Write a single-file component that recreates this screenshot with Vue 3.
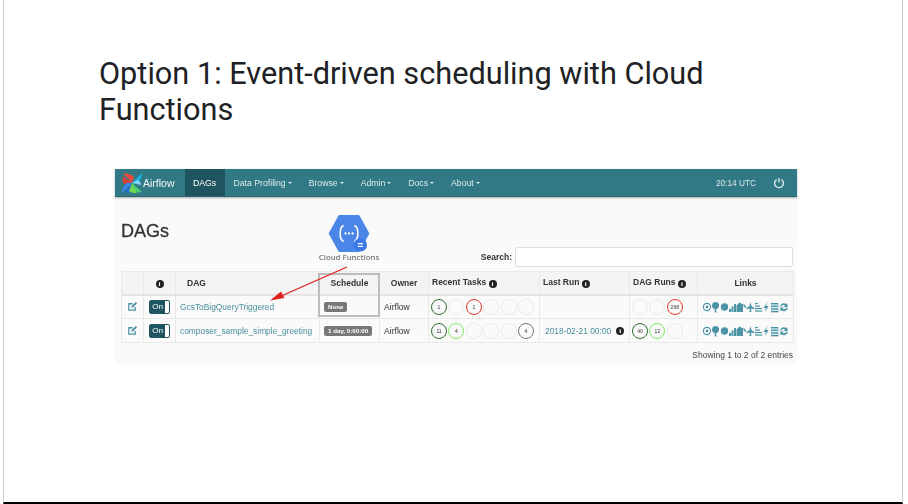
<script setup>
const navItems = ['Data Profiling', 'Browse', 'Admin', 'Docs', 'About']

const rows = [
  {
    dag: 'GcsToBigQueryTriggered',
    schedule: 'None',
    tasks: [
      { n: '1', c: 'dark' }, {}, { n: '1', c: 'red' }, {}, {}, {}
    ],
    lastRun: '',
    runs: [{}, {}, { n: '268', c: 'red' }]
  },
  {
    dag: 'composer_sample_simple_greeting',
    schedule: '1 day, 0:00:00',
    tasks: [
      { n: '11', c: 'dark' }, { n: '4', c: 'lime' }, {}, {}, {}, { n: '4', c: 'gray' }
    ],
    lastRun: '2018-02-21 00:00',
    runs: [{ n: '40', c: 'dark' }, { n: '12', c: 'lime' }, {}]
  }
]
</script>

<template>
  <main class="slide">
    <h1 class="title">Option 1: Event-driven scheduling with Cloud Functions</h1>

    <section class="shot">
      <div class="shot-inner">
        <nav class="nav">
          <div class="brand">
            <svg class="logo" viewBox="0 0 20 20">
              <path d="M10 10 1 0c3 0 8 1 11 4z" fill="#ef4b3e" />
              <path d="M10 10 1 3c-1 3-1 6 1 8z" fill="#d8433a" />
              <path d="M10 10 20 0c0 3-1 7-5 10z" fill="#19b3e6" />
              <path d="M10 10 16 7c2 1 3 3 3 5z" fill="#7fd6f2" />
              <path d="M10 10 0 20c0-3 1-7 5-10z" fill="#3a86f0" />
              <path d="M10 10 3 19c3 1 6 1 8-1z" fill="#2468d8" />
              <path d="M10 10 20 19c-3 1-7 0-10-3z" fill="#42cc74" />
              <path d="M10 10 15 20c-3 0-6 0-8-2z" fill="#6fd455" />
            </svg>
            <span>Airflow</span>
          </div>
          <a class="nav-item active">DAGs</a>
          <a v-for="item in navItems" :key="item" class="nav-item">
            {{ item }}<i class="caret"></i>
          </a>
          <span class="clock">20:14 UTC</span>
          <svg class="power" viewBox="0 0 12 12">
            <path d="M3.6 2.6a4.4 4.4 0 1 0 4.8 0" fill="none" stroke="#e8f1f2" stroke-width="1.3" />
            <path d="M6 1v4.4" stroke="#e8f1f2" stroke-width="1.3" />
          </svg>
        </nav>

        <div class="content">
          <h2 class="heading">DAGs</h2>
          <div class="search">
            <label>Search:</label>
            <input type="text">
          </div>

          <table class="dags">
            <colgroup>
              <col v-for="n in 9" :key="n">
            </colgroup>
            <thead>
              <tr>
                <th></th>
                <th class="center"><span class="info"><b>i</b></span></th>
                <th class="pad">DAG</th>
                <th class="center">Schedule</th>
                <th class="center">Owner</th>
                <th>Recent Tasks <span class="info"><b>i</b></span></th>
                <th>Last Run <span class="info"><b>i</b></span></th>
                <th>DAG Runs <span class="info"><b>i</b></span></th>
                <th class="center">Links</th>
              </tr>
            </thead>
            <tbody>
              <tr v-for="row in rows" :key="row.dag">
                <td class="center">
                  <svg class="edit" viewBox="0 0 12 12">
                    <path d="M9 6.5V10H2V3h4" fill="none" stroke="#4a94a6" stroke-width="1.4" />
                    <path d="M5 5.5 9.5 1 11 2.5 6.5 7H5z" fill="#4a94a6" />
                  </svg>
                </td>
                <td class="center">
                  <span class="toggle"><span class="toggle-on">On</span></span>
                </td>
                <td class="name"><a class="dag-link">{{ row.dag }}</a></td>
                <td class="sched"><span class="badge">{{ row.schedule }}</span></td>
                <td class="owner">Airflow</td>
                <td>
                  <div class="circles">
                    <span v-for="(t, i) in row.tasks" :key="i" class="circle" :class="t.c">{{ t.n }}</span>
                  </div>
                </td>
                <td>
                  <div v-if="row.lastRun" class="last-run">
                    <a class="dag-link">{{ row.lastRun }}</a>
                    <span class="info"><b>i</b></span>
                  </div>
                </td>
                <td>
                  <div class="circles">
                    <span v-for="(t, i) in row.runs" :key="i" class="circle" :class="t.c">{{ t.n }}</span>
                  </div>
                </td>
                <td class="center">
                  <svg class="links" viewBox="0 0 85 12">
                    <g fill="#4a94a6">
                      <circle cx="4" cy="6" r="3.6" fill="none" stroke="#4a94a6" stroke-width="1.1" />
                      <circle cx="4" cy="6" r="1.4" />
                      <circle cx="12.5" cy="4.5" r="3.5" />
                      <rect x="11.7" y="7" width="1.6" height="4.5" />
                      <circle cx="21.5" cy="6" r="3.7" />
                      <rect x="26" y="8" width="2" height="3" />
                      <rect x="28.5" y="5.5" width="2" height="5.5" />
                      <rect x="31" y="3" width="2" height="8" />
                      <path d="M33.5 11V4.5l3-3 3.5 2v7.5z" />
                      <path d="M40.5 2.5 43.5 6l-1 1-2-2z" />
                      <path d="M47.5 1 48.5 5l3 2.2v1L48.5 7.4 48 10l1 1h-3l1-1-.5-2.6-3 .8v-1l3-2.2z" />
                      <rect x="52" y="2" width="3" height="1.2" />
                      <rect x="52" y="4.5" width="5" height="1.2" />
                      <rect x="52" y="7" width="7" height="1.2" />
                      <rect x="52" y="9.5" width="7" height="1.2" />
                      <path d="M64.5 1 60.5 7H63l-1 4 3.6-6H63z" />
                      <rect x="68" y="2" width="7.5" height="1.5" />
                      <rect x="68" y="4.6" width="7.5" height="1.5" />
                      <rect x="68" y="7.2" width="7.5" height="1.5" />
                      <rect x="68" y="9.8" width="7.5" height="1.5" />
                      <path d="M77 5.5a4 4 0 0 1 6.5-2.3l1-1V6h-3.7l1.4-1.4a2.3 2.3 0 0 0-3.8 1zM84.8 6.8a4 4 0 0 1-6.5 2.4l-1 1V6.4H81l-1.4 1.4a2.3 2.3 0 0 0 3.6-1z" />
                    </g>
                  </svg>
                </td>
              </tr>
            </tbody>
          </table>

          <p class="entries">Showing 1 to 2 of 2 entries</p>
        </div>

        <div class="highlight"></div>

        <div class="cloud-fn">
          <svg class="hex" viewBox="0 0 46 42">
            <path d="M12 1h22l11 20-11 20H12L1 21z" fill="#4a86e8" stroke="#4a86e8" stroke-linejoin="round" stroke-width="2" />
            <path d="M17 12c-3 1-4 5-4 9s1 8 4 9M29 12c3 1 4 5 4 9s-1 8-4 9" fill="none" stroke="#fff" stroke-width="1.8" />
            <circle cx="19" cy="21" r="1.3" fill="#fff" />
            <circle cx="23" cy="21" r="1.3" fill="#fff" />
            <circle cx="27" cy="21" r="1.3" fill="#fff" />
            <circle cx="36" cy="34" r="7.5" fill="#3b78e7" />
            <path d="M33 32.5h6M33 35.5h6" stroke="#fff" stroke-width="1.4" />
          </svg>
          <span class="cloud-label">Cloud Functions</span>
        </div>

        <svg class="arrow" viewBox="0 0 90 40">
          <path d="M80 2 12 32" stroke="#e0201c" stroke-width="1.3" fill="none" />
          <path d="M3 35.5 14 26.5l3.4 6.4z" fill="#e0201c" />
        </svg>
      </div>
    </section>
  </main>
</template>

<style scoped>
* {
  box-sizing: border-box;
}

.slide {
  width: 900px;
  height: 504px;
  margin-left: 3px;
  padding: 56px 0 0 95px;
  background: #fff;
  overflow: hidden;
  border-left: 1px solid #ccc;
  border-right: 1px solid #ccc;
  border-bottom: 2px solid #000;
}

.title {
  margin: 0;
  width: 640px;
  font-family: Roboto, "Open Sans", sans-serif;
  font-weight: 400;
  font-size: 30.7px;
  line-height: 36px;
  color: #202124;
}

.shot {
  position: relative;
  margin: 41px 0 0 16px;
  width: 682px;
  height: 196px;
  background: #fafafa;
}

.shot-inner {
  position: relative;
  height: 100%;
  filter: blur(0.45px);
  font-family: "Liberation Sans", Arial, sans-serif;
  color: #333;
}

.nav {
  display: flex;
  align-items: center;
  height: 28px;
  padding: 0 8px 0 7px;
  background: #317a85;
  border-bottom: 1px solid #2b6570;
  box-shadow: 0 1px 2px #aaa;
  color: #dbe9eb;
  font-size: 8.7px;
}

.brand {
  display: flex;
  align-items: center;
  width: 63px;
  gap: 1px;
  font-size: 10.5px;
  color: #f2f7f8;
}

.logo {
  width: 20px;
  height: 20px;
}

.nav-item {
  display: flex;
  align-items: center;
  height: 100%;
  padding: 0 8.5px;
}

.nav-item.active {
  width: 40px;
  padding: 0 0 0 8px;
  background: #1f5560;
  color: #fff;
}

.caret {
  margin-left: 2px;
  border-top: 2.5px solid #dbe9eb;
  border-left: 2.5px solid transparent;
  border-right: 2.5px solid transparent;
}

.clock {
  margin-left: auto;
  margin-right: 17px;
  font-size: 8.3px;
}

.power {
  width: 12px;
  height: 12px;
  margin-right: 4px;
}

.content {
  padding: 24px 4px 0 6px;
}

.heading {
  margin: 0;
  height: 20px;
  font-size: 18px;
  line-height: 20px;
  font-weight: 400;
  -webkit-text-stroke: 0.3px #333;
  color: #333;
}

.search {
  display: flex;
  justify-content: flex-end;
  align-items: center;
  gap: 3px;
  height: 20px;
  margin-top: 6px;
  font-size: 8.5px;
  font-weight: 700;
}

.search input {
  width: 278px;
  height: 20px;
  border: 1px solid #ddd;
  border-radius: 2px;
  background: #fff;
}

.dags {
  width: 672px;
  margin-top: 4px;
  border-collapse: collapse;
  table-layout: fixed;
  font-size: 8.6px;
}

.dags col:nth-child(1) { width: 22px; }
.dags col:nth-child(2) { width: 32px; }
.dags col:nth-child(3) { width: 144px; }
.dags col:nth-child(4) { width: 60px; }
.dags col:nth-child(5) { width: 49px; }
.dags col:nth-child(6) { width: 111px; }
.dags col:nth-child(7) { width: 90px; }
.dags col:nth-child(8) { width: 68px; }
.dags col:nth-child(9) { width: 96px; }

.dags th,
.dags td {
  padding: 0 0 0 2px;
  border: 1px solid #e8e8e8;
  text-align: left;
  white-space: nowrap;
}

.dags th {
  height: 23px;
  padding-left: 3px;
  background: #f4f4f4;
  border-bottom: 2px solid #e4e4e4;
  font-weight: 700;
  font-size: 8.5px;
}

.dags td {
  height: 24px;
}

.dags th.center,
.dags td.center {
  padding: 0;
  text-align: center;
}

.dags th.pad {
  padding-left: 11px;
}

.dags td.name,
.dags td.sched,
.dags td.owner {
  padding-left: 4px;
}

.info {
  display: inline-block;
  width: 8px;
  height: 8px;
  border-radius: 50%;
  background: #222;
  color: #fff;
  font-family: "Liberation Serif", serif;
  font-size: 7px;
  line-height: 8px;
  text-align: center;
  vertical-align: -1px;
}

.edit {
  width: 11px;
  height: 11px;
  vertical-align: middle;
}

.toggle {
  display: inline-block;
  width: 21px;
  height: 14px;
  border: 1px solid #1f5560;
  border-radius: 2px;
  background: #fff;
  vertical-align: middle;
}

.toggle-on {
  display: block;
  width: 15px;
  height: 12px;
  background: #1f5560;
  color: #fff;
  font-size: 8px;
  line-height: 12px;
  text-align: center;
}

.dag-link {
  color: #4a8f9e;
  font-size: 8.4px;
}

.badge {
  display: inline-block;
  padding: 0 4px;
  height: 10px;
  border-radius: 2px;
  background: #777;
  color: #fff;
  font-size: 6.2px;
  font-weight: 700;
  line-height: 10px;
}

.circles {
  display: flex;
  gap: 1.4px;
}

.circle {
  display: flex;
  align-items: center;
  justify-content: center;
  width: 16px;
  height: 16px;
  border: 1px solid #e8e8e8;
  border-radius: 50%;
  font-size: 5px;
}

.circle.dark {
  border: 1.6px solid #2f6b2f;
}

.circle.red {
  border: 1.6px solid #e2332b;
}

.circle.lime {
  border: 1.6px solid #7be85f;
}

.circle.gray {
  border: 1.6px solid #777;
}

.last-run {
  display: flex;
  align-items: center;
  gap: 5px;
  padding-left: 3px;
}

.links {
  width: 85px;
  height: 12px;
  vertical-align: middle;
}

.entries {
  margin: 7px 0 0;
  text-align: right;
  font-size: 8.5px;
  color: #444;
}

.highlight {
  position: absolute;
  left: 203px;
  top: 104px;
  width: 62px;
  height: 44px;
  border: 2px solid #bdbdbd;
}

.cloud-fn {
  position: absolute;
  left: 203px;
  top: 46px;
  width: 62px;
  display: flex;
  flex-direction: column;
  align-items: center;
}

.hex {
  width: 42px;
  height: 37px;
}

.cloud-label {
  font-family: "Open Sans", sans-serif;
  font-size: 7.8px;
  line-height: 10px;
  font-weight: 600;
  color: #777;
  white-space: nowrap;
}

.arrow {
  position: absolute;
  left: 152px;
  top: 96px;
  width: 90px;
  height: 40px;
}
</style>
